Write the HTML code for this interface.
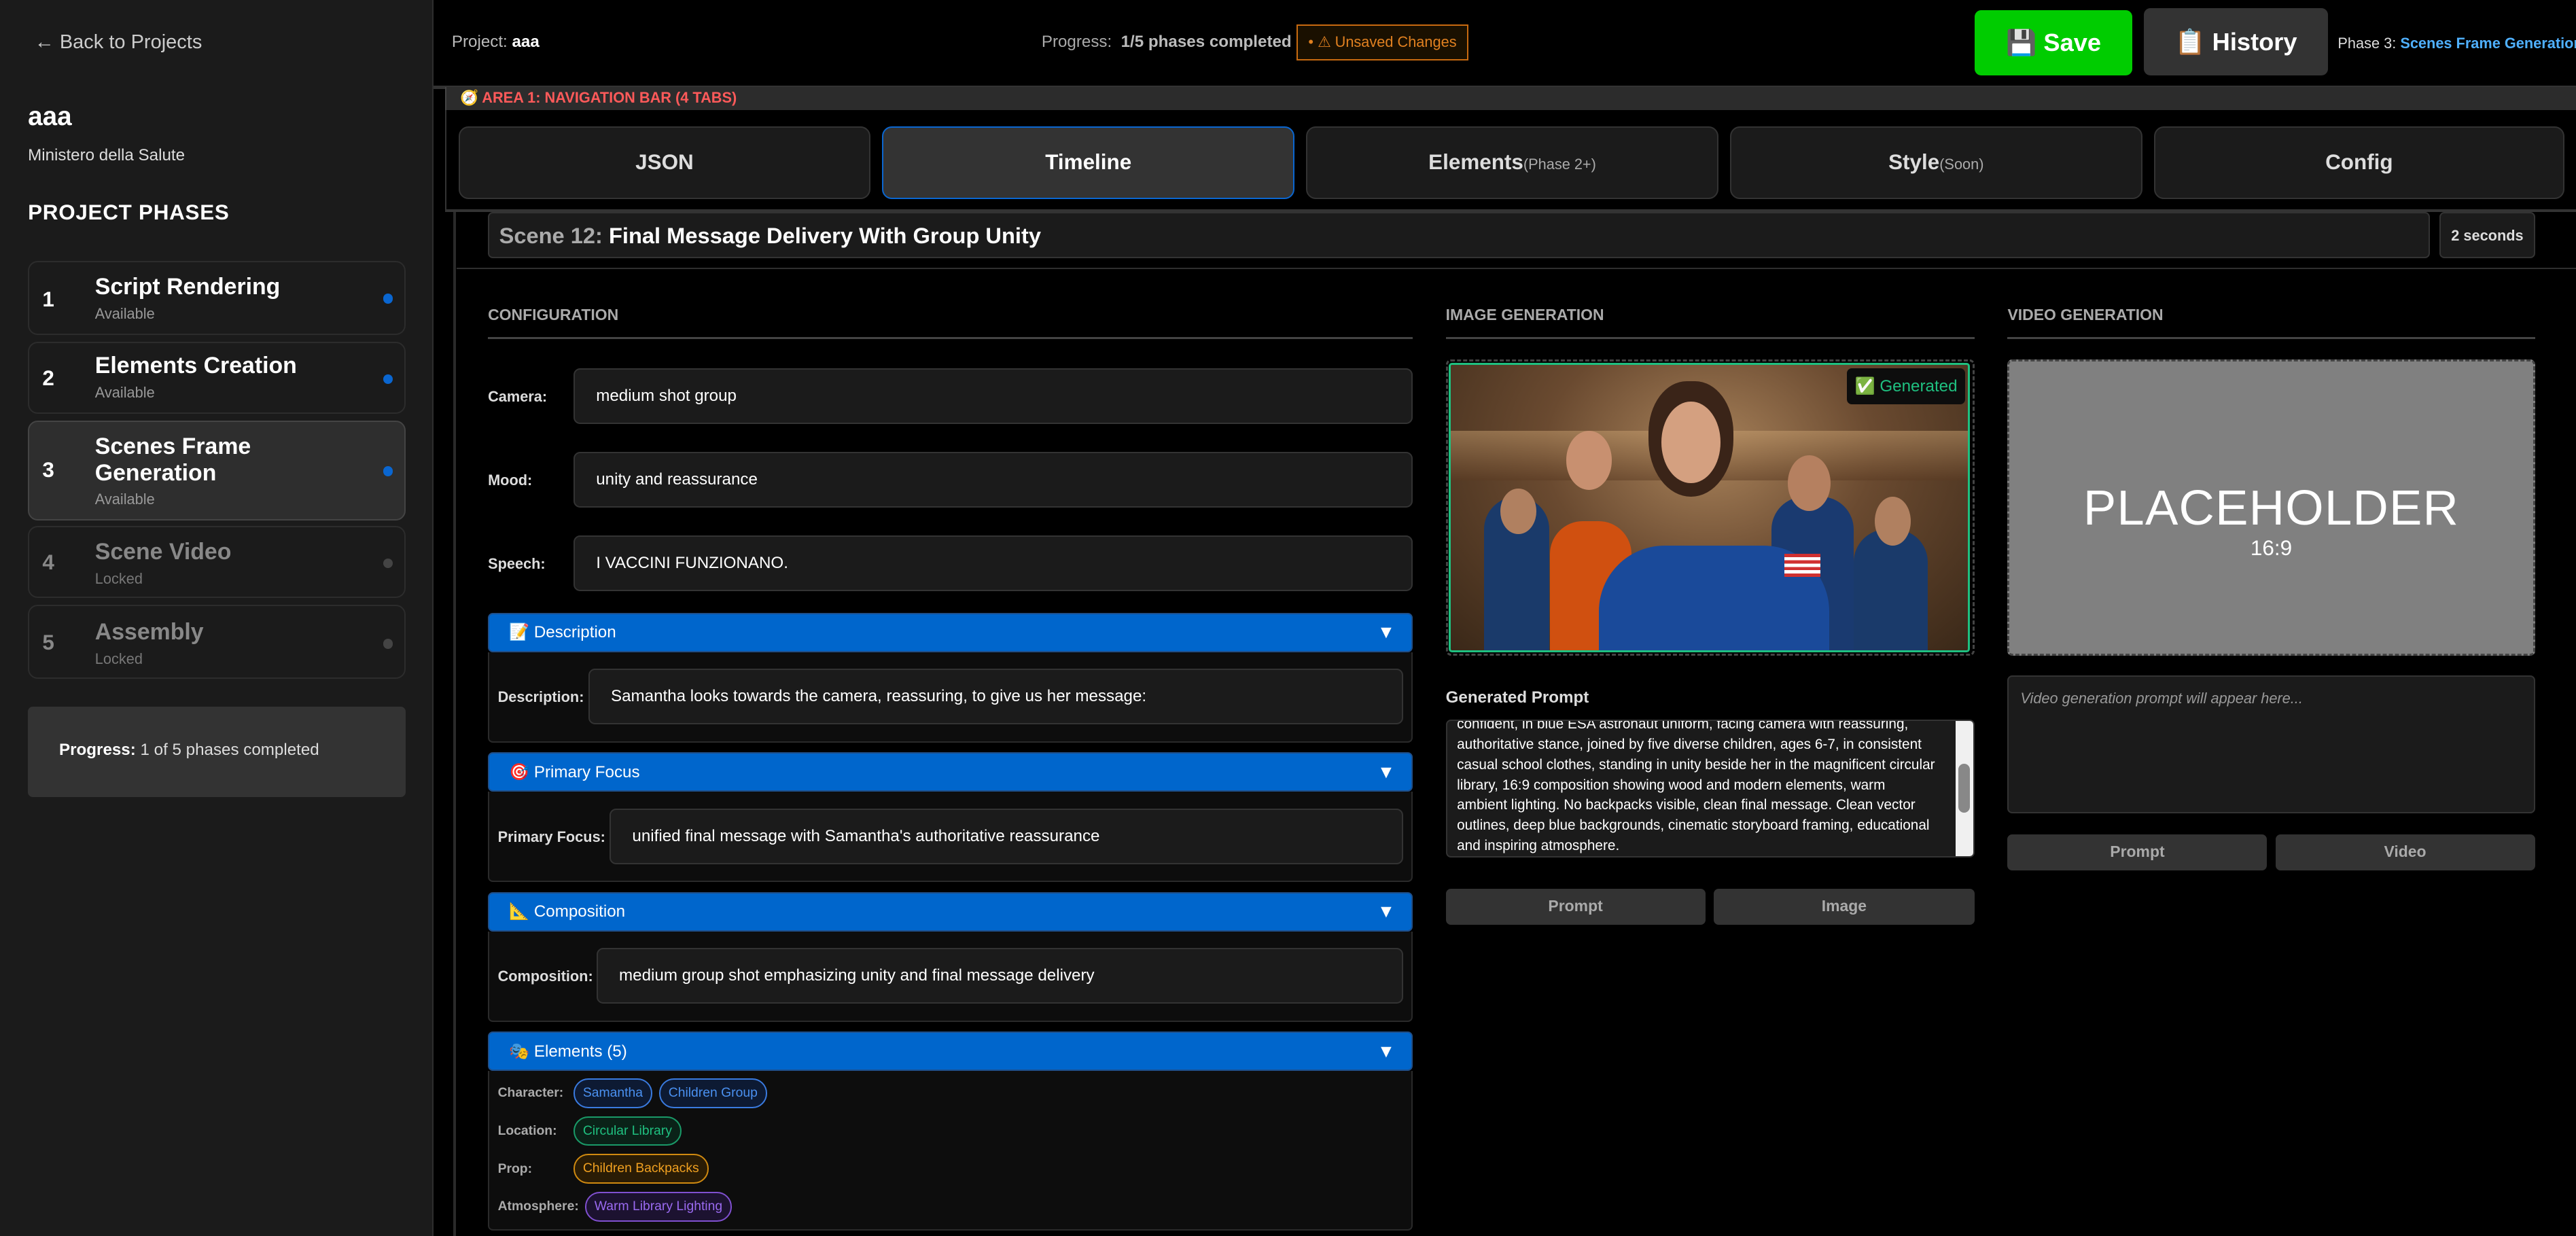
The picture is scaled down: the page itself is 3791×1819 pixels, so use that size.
<!DOCTYPE html>
<html><head><meta charset="utf-8"><style>
html,body{margin:0;padding:0;background:#000;width:3791px;height:1819px;overflow:hidden}
#w{zoom:2.41773;width:1568px;height:752.4px;position:relative;font-family:"Liberation Sans",sans-serif;color:#fff;background:#000;overflow:hidden}
.a{position:absolute;box-sizing:border-box}
.card{border:1px solid #2c2c2c;border-radius:6px;background:#1b1b1b}
.ph .n{position:absolute;left:8px;font-weight:bold;font-size:13px}
.ph .t{position:absolute;left:40px;font-weight:bold;font-size:14px;line-height:16px}
.ph .s{position:absolute;left:40px;font-size:9px;color:#999}
.ph .d{position:absolute;right:7px;width:6px;height:6px;border-radius:50%;background:#0a66d0}
.tab{border:1px solid #333;border-radius:6px;background:#1b1b1b;text-align:center;font-weight:bold;font-size:13px;line-height:42px;color:#ddd}
.tab small{font-size:9px;font-weight:normal;color:#aaa}
.inp{border:1px solid #333;border-radius:4px;background:#1b1b1b;font-size:10px;padding-left:13px;display:flex;align-items:center}
.lbl{font-size:9px;font-weight:bold;color:#ddd}
.hd{background:#0066cc;border:1px solid #1f4f8a;border-radius:3px;font-size:10px;padding-left:12px;display:flex;align-items:center}
.hd b{position:absolute;right:10px;font-size:11px}
.body{border:1px solid #2a2a2a;border-top:none;border-radius:0 0 3px 3px;background:#0d0d0d}
.sec{font-size:9.5px;font-weight:bold;color:#aaa;border-bottom:1.5px solid #444;padding-bottom:8px}
.btn{background:#333;border-radius:3px;text-align:center;font-size:9.5px;font-weight:bold;color:#aaa;line-height:21px}
.row{position:absolute;left:303px;height:19px;display:flex;align-items:center;font-size:8px;color:#aaa;font-weight:bold}
.row .k{width:46px}
.pill{box-sizing:border-box;height:18px;line-height:16px;border:1px solid;border-radius:9px;font-size:8px;font-weight:normal;padding:0 5px;margin-right:4px;white-space:nowrap}
</style></head><body><div id="w">
<!-- sidebar -->
<div class="a" style="left:0;top:0;width:264px;height:753px;background:#1b1b1b;border-right:1px solid #2e2e2e"></div>
<div class="a" style="left:21px;top:19px;font-size:12px;color:#ccc">← Back to Projects</div>
<div class="a" style="left:17px;top:62px;font-size:16px;font-weight:bold">aaa</div>
<div class="a" style="left:17px;top:89px;font-size:10px;color:#ddd">Ministero della Salute</div>
<div class="a" style="left:17px;top:122px;font-size:13px;font-weight:bold;letter-spacing:.3px">PROJECT PHASES</div>
<div class="a card ph" style="left:17px;top:159px;width:230px;height:45px"><span class="n" style="top:15px">1</span><span class="t" style="top:7px">Script Rendering</span><span class="s" style="top:26px">Available</span><span class="d" style="top:19px"></span></div>
<div class="a card ph" style="left:17px;top:208px;width:230px;height:44px"><span class="n" style="top:14px">2</span><span class="t" style="top:6px">Elements Creation</span><span class="s" style="top:25px">Available</span><span class="d" style="top:19px"></span></div>
<div class="a card ph" style="left:17px;top:256px;width:230px;height:61px;background:#2e2e2e;border-color:#444"><span class="n" style="top:22px">3</span><span class="t" style="top:7px">Scenes Frame<br>Generation</span><span class="s" style="top:42px">Available</span><span class="d" style="top:27px"></span></div>
<div class="a card ph" style="left:17px;top:320px;width:230px;height:44px"><span class="n" style="top:14px;color:#888">4</span><span class="t" style="top:7px;color:#888">Scene Video</span><span class="s" style="top:26px;color:#777">Locked</span><span class="d" style="top:19px;background:#444"></span></div>
<div class="a card ph" style="left:17px;top:368px;width:230px;height:45px"><span class="n" style="top:15px;color:#888">5</span><span class="t" style="top:8px;color:#888">Assembly</span><span class="s" style="top:27px;color:#777">Locked</span><span class="d" style="top:20px;background:#444"></span></div>
<div class="a" style="left:17px;top:430px;width:230px;height:55px;background:#333;border-radius:3px;font-size:10px;color:#ddd;padding:21px 0 0 19px"><b style="color:#fff">Progress:</b> 1 of 5 phases completed</div>
<!-- header -->
<div class="a" style="left:264px;top:52px;width:1304px;height:2px;background:#333"></div>
<div class="a" style="left:275px;top:20px;font-size:10px;color:#bbb">Project: <b style="color:#fff">aaa</b></div>
<div class="a" style="left:634px;top:20px;font-size:10px;color:#aaa">Progress: &nbsp;<b style="color:#bbb">1/5 phases completed</b></div>
<div class="a" style="left:789px;top:15px;width:105px;height:22px;border:1px solid #c86a10;background:#1a1000;font-size:9px;color:#e08020;text-align:center;line-height:20px">• ⚠ Unsaved Changes</div>
<div class="a" style="left:1202px;top:6px;width:96px;height:40px;background:#00cc00;border-radius:4px;font-size:15px;font-weight:bold;text-align:center;line-height:40px">💾 Save</div>
<div class="a" style="left:1305px;top:5px;width:112px;height:41px;background:#333;border-radius:4px;font-size:15px;font-weight:bold;text-align:center;line-height:41px">📋 History</div>
<div class="a" style="left:1423px;top:21px;font-size:9px;color:#ddd;white-space:nowrap">Phase 3: <b style="color:#4fb0ff">Scenes Frame Generation</b></div>
<!-- area bar -->
<div class="a" style="left:271px;top:53px;width:1297px;height:14px;background:#2c2c2c;border-left:1px solid #444"></div>
<div class="a" style="left:280px;top:54px;font-size:9px;font-weight:bold;color:#ff5a5a">🧭 AREA 1: NAVIGATION BAR (4 TABS)</div>
<div class="a" style="left:271px;top:67px;width:1297px;height:62px;border-left:1px solid #333;border-bottom:2px solid #333"></div>
<div class="a tab" style="left:279px;top:77px;width:251px;height:44px">JSON</div>
<div class="a tab" style="left:537px;top:77px;width:251px;height:44px;background:#333;border-color:#0a66d0;color:#fff">Timeline</div>
<div class="a tab" style="left:795px;top:77px;width:251px;height:44px">Elements<small>(Phase 2+)</small></div>
<div class="a tab" style="left:1053px;top:77px;width:251px;height:44px">Style<small>(Soon)</small></div>
<div class="a tab" style="left:1311px;top:77px;width:250px;height:44px">Config</div>
<!-- main frame -->
<div class="a" style="left:276px;top:129px;width:1292px;height:624px;border-left:2px solid #2a2a2a"></div>
<div class="a" style="left:278px;top:163px;width:1290px;height:1px;background:#2e2e2e"></div>
<div class="a" style="left:297px;top:129px;width:1182px;height:28px;background:#1b1b1b;border:1px solid #333;border-radius:3px;font-size:13.5px;font-weight:bold;padding:6px 0 0 6px"><span style="color:#aaa">Scene 12:</span> Final Message Delivery With Group Unity</div>
<div class="a" style="left:1485px;top:129px;width:58px;height:28px;background:#1b1b1b;border:1px solid #333;border-radius:3px;font-size:9px;font-weight:bold;color:#ddd;text-align:center;line-height:27px">2 seconds</div>
<!-- config -->
<div class="a sec" style="left:297px;top:186px;width:563px">CONFIGURATION</div>
<div class="a lbl" style="left:297px;top:236px">Camera:</div>
<div class="a inp" style="left:349px;top:224px;width:511px;height:34px">medium shot group</div>
<div class="a lbl" style="left:297px;top:287px">Mood:</div>
<div class="a inp" style="left:349px;top:275px;width:511px;height:34px">unity and reassurance</div>
<div class="a lbl" style="left:297px;top:338px">Speech:</div>
<div class="a inp" style="left:349px;top:326px;width:511px;height:34px">I VACCINI FUNZIONANO.</div>

<div class="a hd" style="left:297px;top:373px;width:563px;height:24px">📝 Description<b>▼</b></div>
<div class="a body" style="left:297px;top:397px;width:563px;height:55px"></div>
<div class="a lbl" style="left:303px;top:419px">Description:</div>
<div class="a inp" style="left:358px;top:407px;width:496px;height:34px">Samantha looks towards the camera, reassuring, to give us her message:</div>

<div class="a hd" style="left:297px;top:458px;width:563px;height:24px">🎯 Primary Focus<b>▼</b></div>
<div class="a body" style="left:297px;top:482px;width:563px;height:55px"></div>
<div class="a lbl" style="left:303px;top:504px">Primary Focus:</div>
<div class="a inp" style="left:371px;top:492px;width:483px;height:34px">unified final message with Samantha's authoritative reassurance</div>

<div class="a hd" style="left:297px;top:543px;width:563px;height:24px">📐 Composition<b>▼</b></div>
<div class="a body" style="left:297px;top:567px;width:563px;height:55px"></div>
<div class="a lbl" style="left:303px;top:589px">Composition:</div>
<div class="a inp" style="left:363px;top:577px;width:491px;height:34px">medium group shot emphasizing unity and final message delivery</div>

<div class="a hd" style="left:297px;top:628px;width:563px;height:24px">🎭 Elements (5)<b>▼</b></div>
<div class="a body" style="left:297px;top:652px;width:563px;height:97px"></div>
<div class="row" style="top:656px"><span class="k">Character:</span><span class="pill" style="color:#4a90f0;border-color:#3a7be0;background:#0d1a33">Samantha</span><span class="pill" style="color:#4a90f0;border-color:#3a7be0;background:#0d1a33">Children Group</span></div>
<div class="row" style="top:679px"><span class="k">Location:</span><span class="pill" style="color:#1fc080;border-color:#1a9a68;background:#0a2218">Circular Library</span></div>
<div class="row" style="top:702px"><span class="k">Prop:</span><span class="pill" style="color:#f0a020;border-color:#d08a10;background:#2a1c05">Children Backpacks</span></div>
<div class="row" style="top:725px"><span class="k" style="width:53px">Atmosphere:</span><span class="pill" style="color:#9a6af0;border-color:#8050d0;background:#1c1230">Warm Library Lighting</span></div>
<!-- image gen -->
<div class="a sec" style="left:880px;top:186px;width:322px">IMAGE GENERATION</div>
<div class="a" style="left:880px;top:219px;width:322px;height:180px;border:1.5px dashed #444;border-radius:3px"></div>
<div class="a" style="left:882px;top:221px;width:317px;height:176px;border:1.5px solid #1fc080;border-radius:2px;overflow:hidden;background:radial-gradient(ellipse at 50% 30%,#a8825a 0%,#6a4a30 45%,#3a2818 100%)">
 <div class="a" style="left:0;top:40px;width:317px;height:30px;background:linear-gradient(#c8a070,#5a3a22);opacity:.5"></div>
 <div class="a" style="left:20px;top:80px;width:40px;height:100px;border-radius:20px 20px 0 0;background:#1a3a6a"></div>
 <div class="a" style="left:30px;top:75px;width:22px;height:28px;border-radius:50%;background:#b08060"></div>
 <div class="a" style="left:60px;top:95px;width:50px;height:90px;border-radius:20px 20px 0 0;background:#d05010"></div>
 <div class="a" style="left:70px;top:40px;width:28px;height:36px;border-radius:50%;background:#c89070"></div>
 <div class="a" style="left:195px;top:80px;width:50px;height:100px;border-radius:20px 20px 0 0;background:#1a3a70"></div>
 <div class="a" style="left:205px;top:55px;width:26px;height:34px;border-radius:50%;background:#b58060"></div>
 <div class="a" style="left:245px;top:100px;width:45px;height:80px;border-radius:20px 20px 0 0;background:#1a3a6a"></div>
 <div class="a" style="left:258px;top:80px;width:22px;height:30px;border-radius:50%;background:#b08060"></div>
 <div class="a" style="left:90px;top:110px;width:140px;height:70px;border-radius:40px 40px 0 0;background:#1a4a9a"></div>
 <div class="a" style="left:120px;top:10px;width:52px;height:70px;border-radius:45% 45% 50% 50%;background:#3a2418"></div>
 <div class="a" style="left:128px;top:22px;width:36px;height:50px;border-radius:50%;background:#d4a080"></div>
 <div class="a" style="left:203px;top:115px;width:22px;height:14px;background:repeating-linear-gradient(#d03030 0 2px,#fff 2px 4px)"></div>
</div>
<div class="a" style="left:1124px;top:224px;width:72px;height:22px;background:#0d0d0d;border-radius:3px;font-size:10px;color:#1fc080;line-height:22px;padding-left:5px">✅ Generated</div>
<div class="a" style="left:880px;top:419px;font-size:10px;font-weight:bold;color:#ddd">Generated Prompt</div>
<div class="a" style="left:880px;top:438px;width:322px;height:84px;background:#1b1b1b;border:1px solid #333;border-radius:3px;overflow:hidden">
 <div class="a" style="left:6px;top:-4px;width:292px;font-size:8.6px;line-height:12.3px;color:#fff">confident, in blue ESA astronaut uniform, facing camera with reassuring, authoritative stance, joined by five diverse children, ages 6-7, in consistent casual school clothes, standing in unity beside her in the magnificent circular library, 16:9 composition showing wood and modern elements, warm ambient lighting. No backpacks visible, clean final message. Clean vector outlines, deep blue backgrounds, cinematic storyboard framing, educational and inspiring atmosphere.</div>
 <div class="a" style="right:0;top:0;width:11px;height:84px;background:#f0f0f0"></div>
 <div class="a" style="right:2px;top:26px;width:7px;height:30px;background:#888;border-radius:4px"></div>
</div>
<div class="a btn" style="left:880px;top:541px;width:158px;height:22px">Prompt</div>
<div class="a btn" style="left:1043px;top:541px;width:159px;height:22px">Image</div>
<!-- video gen -->
<div class="a sec" style="left:1222px;top:186px;width:321px">VIDEO GENERATION</div>
<div class="a" style="left:1222px;top:219px;width:321px;height:180px;border:1.5px dashed #444;border-radius:3px;background:#808080;text-align:center;color:#fff">
 <div style="font-size:30px;margin-top:72px;letter-spacing:0.5px;line-height:34px">PLACEHOLDER</div>
 <div style="font-size:13px;line-height:15px">16:9</div>
</div>
<div class="a" style="left:1222px;top:411px;width:321px;height:84px;background:#1b1b1b;border:1px solid #333;border-radius:3px;font-size:9px;font-style:italic;color:#999;padding:8px 7px">Video generation prompt will appear here...</div>
<div class="a btn" style="left:1222px;top:508px;width:158px;height:22px">Prompt</div>
<div class="a btn" style="left:1385px;top:508px;width:158px;height:22px">Video</div>
</div></body></html>
